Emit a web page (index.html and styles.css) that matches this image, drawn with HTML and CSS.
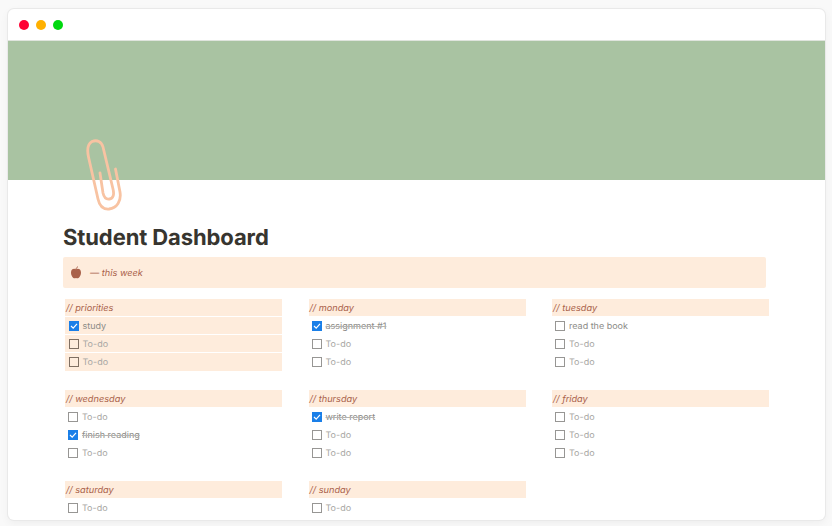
FILE: index.html
```html
<!DOCTYPE html>
<html lang="en">
<head>
<meta charset="utf-8">
<title>Student Dashboard</title>
<link rel="stylesheet" href="styles.css">
</head>
<body>
<div class="window">
  <div class="titlebar">
    <span class="dot dot-red"></span>
    <span class="dot dot-yellow"></span>
    <span class="dot dot-green"></span>
  </div>
  <div class="banner"></div>
  <svg class="clip" width="50" height="80" viewBox="0 0 50 80" aria-hidden="true">
    <path d="M35.5 30 L40 53 C41.500 62 37 69 29 70 C23 70.500 19.500 67 18 60 L8.500 18 C7 11 7.500 5 12 2.500 C17 .5 21.500 2.500 23 8 L33 50 C34.500 56 33 59.500 29.500 60 C26 60.500 24 58.500 23 54 L20 34" />
  </svg>
  <main class="page">
    <h1 class="title">Student Dashboard</h1>
    <div class="callout">
      <svg class="apple" width="12" height="13" viewBox="0 0 12 13" aria-hidden="true">
        <path class="apple-body" d="M6 3.300 C7.500 2.300 11 2.500 11 6.500 C11 10 8.800 12.300 7.400 12.300 C6.800 12.300 6.400 12 6 12 C5.600 12 5.200 12.300 4.600 12.300 C3.200 12.300 1 10 1 6.500 C1 2.500 4.500 2.300 6 3.300 Z"/>
        <path class="apple-stem" d="M6 3.500 C6 2.200 6.800 1.200 8 .8"/>
      </svg>
      <span class="callout-text">— this week</span>
    </div>
    <div class="grid">
      <section class="col tinted">
        <h2 class="head">// priorities</h2>
        <div class="todo done"><span class="box checked"><svg width="10" height="10" viewBox="0 0 10 10"><path d="M2 5 L4.200 7.100 L8 2.900"/></svg></span><span class="label">study</span></div>
        <div class="todo"><span class="box"></span><span class="label">To-do</span></div>
        <div class="todo"><span class="box"></span><span class="label">To-do</span></div>
      </section>
      <section class="col">
        <h2 class="head">// monday</h2>
        <div class="todo done"><span class="box checked"><svg width="10" height="10" viewBox="0 0 10 10"><path d="M2 5 L4.200 7.100 L8 2.900"/></svg></span><span class="label strike">assignment #1</span></div>
        <div class="todo"><span class="box"></span><span class="label">To-do</span></div>
        <div class="todo"><span class="box"></span><span class="label">To-do</span></div>
      </section>
      <section class="col">
        <h2 class="head">// tuesday</h2>
        <div class="todo done"><span class="box"></span><span class="label">read the book</span></div>
        <div class="todo"><span class="box"></span><span class="label">To-do</span></div>
        <div class="todo"><span class="box"></span><span class="label">To-do</span></div>
      </section>
      <section class="col">
        <h2 class="head">// wednesday</h2>
        <div class="todo"><span class="box"></span><span class="label">To-do</span></div>
        <div class="todo done"><span class="box checked"><svg width="10" height="10" viewBox="0 0 10 10"><path d="M2 5 L4.200 7.100 L8 2.900"/></svg></span><span class="label strike">finish reading</span></div>
        <div class="todo"><span class="box"></span><span class="label">To-do</span></div>
      </section>
      <section class="col">
        <h2 class="head">// thursday</h2>
        <div class="todo done"><span class="box checked"><svg width="10" height="10" viewBox="0 0 10 10"><path d="M2 5 L4.200 7.100 L8 2.900"/></svg></span><span class="label strike">write report</span></div>
        <div class="todo"><span class="box"></span><span class="label">To-do</span></div>
        <div class="todo"><span class="box"></span><span class="label">To-do</span></div>
      </section>
      <section class="col">
        <h2 class="head">// friday</h2>
        <div class="todo"><span class="box"></span><span class="label">To-do</span></div>
        <div class="todo"><span class="box"></span><span class="label">To-do</span></div>
        <div class="todo"><span class="box"></span><span class="label">To-do</span></div>
      </section>
      <section class="col">
        <h2 class="head">// saturday</h2>
        <div class="todo"><span class="box"></span><span class="label">To-do</span></div>
      </section>
      <section class="col">
        <h2 class="head">// sunday</h2>
        <div class="todo"><span class="box"></span><span class="label">To-do</span></div>
      </section>
    </div>
  </main>
</div>
</body>
</html>
```
FILE: styles.css
```css
* { box-sizing: border-box; }
html, body { height: 100%; }
body {
  margin: 0;
  padding: 9px 7px 6px 8px;
  background: #f9f9f9;
  font-family: "Inter", "Liberation Sans", sans-serif;
  text-rendering: geometricPrecision;
  overflow: hidden;
}
.window {
  position: relative;
  height: 511px;
  background: #fff;
  border-radius: 6px;
  overflow: hidden;
  box-shadow: 0 0 0 1px #e9e9e9, 0 3px 10px rgba(0, 0, 0, .05);
}
.titlebar {
  height: 32px;
  padding: 0 0 0 11px;
  display: flex;
  align-items: center;
  gap: 7px;
  border-bottom: 1px solid #dfe4dd;
}
.dot { width: 10px; height: 10px; border-radius: 50%; }
.dot-red { background: #ff0033; }
.dot-yellow { background: #ffb000; }
.dot-green { background: #00d80f; }
.banner { height: 139px; background: #a9c3a2; }
.clip { position: absolute; left: 72px; top: 130px; }
.clip path { fill: none; stroke: #f8c3a2; stroke-width: 2.800; stroke-linecap: round; stroke-linejoin: round; }
.page { padding: 44px 0 0 55px; }
.title {
  margin: 0 0 5px;
  padding-top: 1px;
  font-size: 22px;
  line-height: 27px;
  font-weight: 700;
  letter-spacing: -.1px;
  color: #37352f;
}
.callout {
  width: 703px;
  height: 31px;
  padding: 0 0 0 7px;
  display: flex;
  align-items: center;
  gap: 8px;
  background: #feecdc;
  border-radius: 2px;
}
.apple-body { fill: #a9614a; }
.apple-stem { fill: none; stroke: #a9614a; stroke-width: 1; }
.callout-text { padding-top: 1px; font-size: 9.200px; font-style: italic; color: #a9614a; font-weight: 400; }
.grid {
  margin: 11px 0 0 2px;
  display: grid;
  grid-template-columns: repeat(3, 217px);
  column-gap: 26.500px;
  row-gap: 19px;
}
.head {
  margin: 0 0 1px;
  height: 17px;
  padding: 1px 0 0 1px;
  background: #feecdc;
  font-size: 9.200px;
  line-height: 17px;
  font-weight: 400;
  font-style: italic;
  color: #a9614a;
}
.todo {
  height: 17px;
  margin-bottom: 1px;
  padding: 0 0 0 3px;
  display: flex;
  align-items: center;
  gap: 4px;
  font-size: 9px;
  color: #a8a7a4;
}
.label { padding-top: 1px; }
.tinted .todo { background: #feecdc; padding-left: 3.500px; }
.tinted .todo:last-child { margin-bottom: 0; height: 18px; }
.done { color: #8c8b87; }
.strike { text-decoration: line-through; text-decoration-color: #b5b4b1; }
.box {
  width: 10px;
  height: 10px;
  flex: none;
  border: 1px solid #979694;
  display: flex;
  align-items: center;
  justify-content: center;
}
.tinted .box { border-color: #7f6f62; }
.box.checked { background: #1a7fe8; border: 0; }
.box svg { display: block; }
.box svg path { fill: none; stroke: #fff; stroke-width: 1.200; }
```
